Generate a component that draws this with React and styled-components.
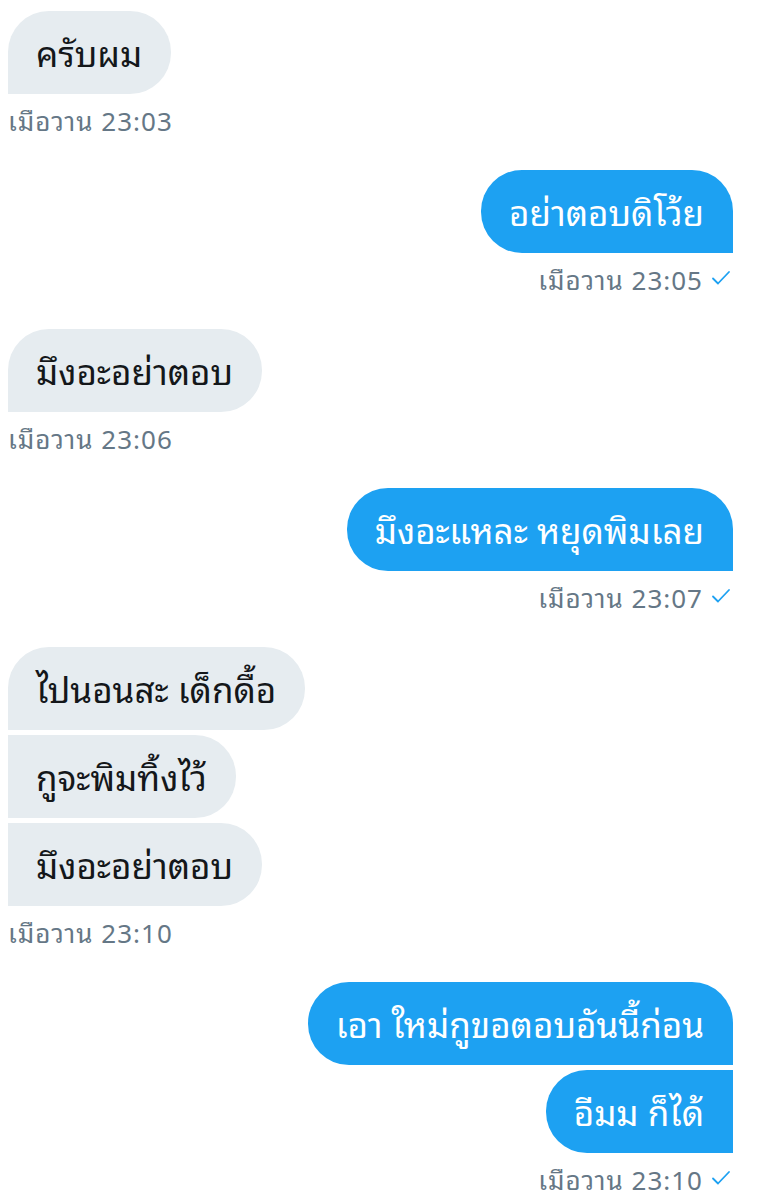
import React from "react";
import styled, { createGlobalStyle } from "styled-components";

const GlobalStyle = createGlobalStyle`
  body {
    margin: 0;
    background: #ffffff;
    font-family: "Noto Sans Thai Looped", "Loma", "Garuda", "Noto Sans Thai", "Noto Sans", sans-serif;
  }
`;

// chat data, grouped by sender
const groups = [
  { mine: false, texts: ["ครับผม"], time: "23:03" },
  { mine: true, texts: ["อย่าตอบดิโว้ย"], time: "23:05" },
  { mine: false, texts: ["มึงอะอย่าตอบ"], time: "23:06" },
  { mine: true, texts: ["มึงอะแหละ หยุดพิมเลย"], time: "23:07" },
  {
    mine: false,
    texts: ["ไปนอนสะ เด็กดื้อ", "กูจะพิมทิ้งไว้", "มึงอะอย่าตอบ"],
    time: "23:10",
  },
  { mine: true, texts: ["เอา ใหม่กูขอตอบอันนี้ก่อน", "อีมม ก็ได้"], time: "23:10" },
];

const Page = styled.div`
  display: flex;
  flex-direction: column;
  gap: 36px;
  padding: 11px 44px 0 8px;
`;

const Group = styled.div`
  display: flex;
  flex-direction: column;
  align-items: ${(p) => (p.mine ? "flex-end" : "flex-start")};
`;

const Stack = styled.div`
  display: flex;
  flex-direction: column;
  gap: 5px;
  align-items: ${(p) => (p.mine ? "flex-end" : "flex-start")};
`;

const Bubble = styled.div`
  height: 83px;
  box-sizing: border-box;
  display: flex;
  align-items: center;
  padding: 0 29px 2px 28px;
  font-size: 35px;
  line-height: 1;
  white-space: nowrap;
  background: ${(p) => (p.mine ? "#1da1f2" : "#e6ecf0")};
  color: ${(p) => (p.mine ? "#ffffff" : "#14171a")};
  border-radius: ${(p) =>
    p.mine
      ? `41px ${p.first ? "41px" : "0"} 0 41px`
      : `${p.first ? "41px" : "0"} 41px 41px 0`};
`;

const Stamp = styled.div`
  display: flex;
  align-items: center;
  gap: 8px;
  margin-top: 10px;
  height: 30px;
  font-size: 26px;
  letter-spacing: 1px;
  color: #657786;
`;

const Check = () => (
  <svg width="22" height="16" viewBox="0 0 22 16">
    <polyline
      points="2,8.5 7,13.5 18,2"
      fill="none"
      stroke="#1da1f2"
      strokeWidth="1.8"
      strokeLinecap="round"
      strokeLinejoin="round"
    />
  </svg>
);

export default function App() {
  return (
    <>
      <GlobalStyle />
      <Page>
        {groups.map((g, i) => (
          <Group key={i} mine={g.mine}>
            <Stack mine={g.mine}>
              {g.texts.map((t, j) => (
                <Bubble key={j} mine={g.mine} first={j === 0}>
                  {t}
                </Bubble>
              ))}
            </Stack>
            <Stamp>
              <span>เมือวาน {g.time}</span>
              {g.mine && <Check />}
            </Stamp>
          </Group>
        ))}
      </Page>
    </>
  );
}
